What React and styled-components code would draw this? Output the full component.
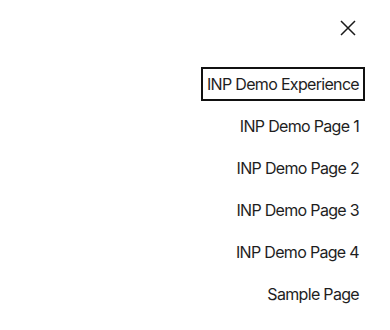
import styled, { createGlobalStyle } from "styled-components";

const GlobalStyle = createGlobalStyle`
  body {
    margin: 0;
    background: #ffffff;
    font-family: Inter, "Noto Sans", sans-serif;
  }
`;

const Panel = styled.nav`
  width: 390px;
  height: 330px;
  box-sizing: border-box;
  padding: 13px 26px 0 0;
  display: flex;
  flex-direction: column;
  align-items: flex-end;
  background: #fff;
`;

const CloseButton = styled.button`
  width: 30px;
  height: 30px;
  margin-right: 1px;
  padding: 0;
  border: none;
  background: none;
  display: flex;
  align-items: center;
  justify-content: center;
  cursor: pointer;
  color: #1a1a1a;
`;

const Menu = styled.ul`
  list-style: none;
  margin: 25px 0 0;
  padding: 0;
  display: flex;
  flex-direction: column;
  align-items: flex-end;
  gap: 10px;
`;

const Link = styled.a`
  display: block;
  padding: 4px 5px;
  font-size: 16px;
  line-height: 24px;
  letter-spacing: -0.68px;
  color: #1e1e1e;
  text-decoration: none;
  outline: ${({ $focused }) => ($focused ? "2px solid #111" : "none")};
  outline-offset: -1px;
`;

const pages = [
  "INP Demo Experience",
  "INP Demo Page 1",
  "INP Demo Page 2",
  "INP Demo Page 3",
  "INP Demo Page 4",
  "Sample Page",
];

const App = () => {
  return (
    <>
      <GlobalStyle />
      <Panel>
        <CloseButton aria-label="Close menu">
          <svg width="16" height="16" viewBox="0 0 16 16" fill="none">
            <path
              d="M1 1L15 15M15 1L1 15"
              stroke="currentColor"
              strokeWidth="1.5"
            />
          </svg>
        </CloseButton>
        <Menu>
          {pages.map((page, i) => (
            <li key={page}>
              <Link href="#" $focused={i === 0}>
                {page}
              </Link>
            </li>
          ))}
        </Menu>
      </Panel>
    </>
  );
};

export default App;
